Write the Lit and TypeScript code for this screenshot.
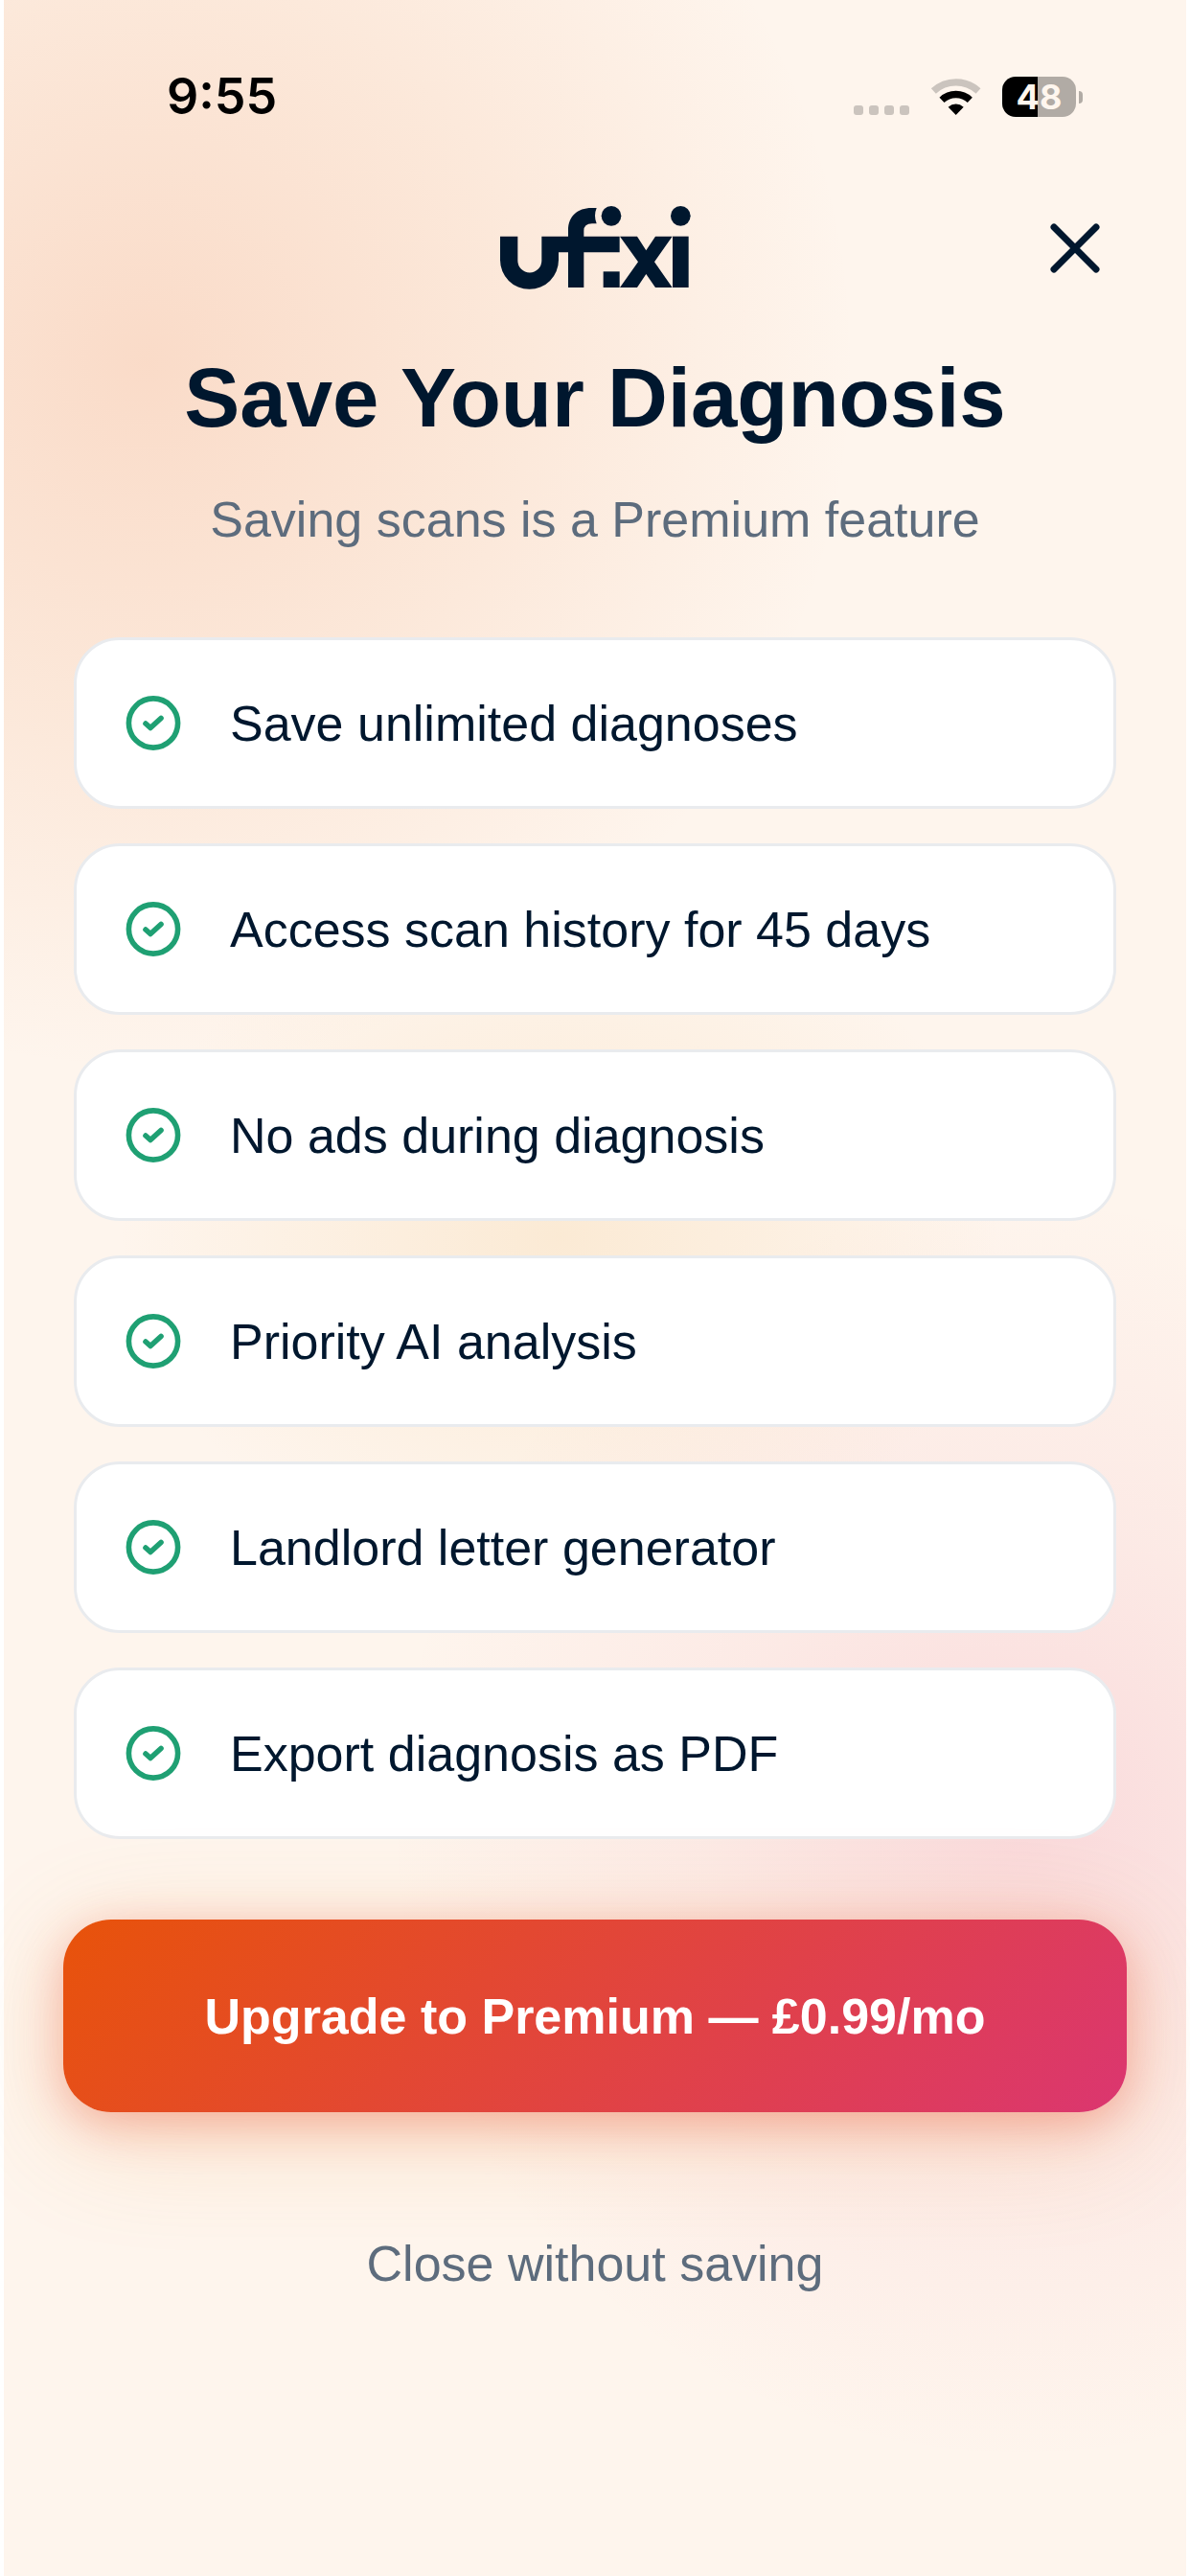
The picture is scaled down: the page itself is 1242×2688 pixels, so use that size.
import { LitElement, html, css, svg } from "lit";
import { customElement, property } from "lit/decorators.js";

@customElement("status-bar")
export class StatusBar extends LitElement {
  @property() time = "9:55";
  @property({ type: Number }) battery = 48;

  static styles = css`
    :host {
      display: flex;
      justify-content: space-between;
      align-items: center;
      padding: 80px 108px 0 170px;
      font-family: Inter, "Liberation Sans", sans-serif;
      color: #000;
    }
    .time {
      font-size: 52px;
      line-height: 42px;
      font-weight: 600;
    }
    .indicators {
      display: flex;
      align-items: center;
      gap: 22px;
    }
    .signal {
      display: flex;
      align-self: flex-end;
      gap: 6px;
      padding-bottom: 2px;
    }
    .dot {
      width: 10px;
      height: 10px;
      border-radius: 3px;
      background: #cbc4be;
    }
    .wifi {
      display: block;
      width: 53px;
      height: 38px;
    }
    .power {
      display: flex;
      align-items: center;
      gap: 3px;
    }
    .battery {
      display: flex;
      align-items: center;
      justify-content: center;
      width: 77px;
      height: 42px;
      border-radius: 14px;
      color: #fff6ee;
      font-size: 36px;
      line-height: 42px;
      font-weight: 700;
    }
    .nub {
      width: 4px;
      height: 13px;
      border-radius: 0 4px 4px 0;
      background: #b1aba5;
    }
  `;

  render() {
    const fill = `background: linear-gradient(90deg, #000 ${this.battery}%, #b1aba5 ${this.battery}%)`;
    return html`
      <span class="time">${this.time}</span>
      <div class="indicators">
        <div class="signal">
          ${[0, 1, 2, 3].map(() => html`<span class="dot"></span>`)}
        </div>
        <svg class="wifi" viewBox="332 63 159 114" aria-hidden="true">
          <path d="M342 102A103 103 0 0 1 482 102" fill="none" stroke="#cbc4be" stroke-width="22" />
          <path d="M368 130A64 64 0 0 1 456 130" fill="none" stroke="#000" stroke-width="22" />
          <path d="M412 177L388 152A36 36 0 0 1 436 152Z" />
        </svg>
        <div class="power">
          <span class="battery" style=${fill}>${this.battery}</span>
          <span class="nub"></span>
        </div>
      </div>
    `;
  }
}

const logo = svg`
  <path d="M124 169H179V245A37 37 0 0 0 254 245V169H337V150C337 106 366 80 410 80H426Q416 104 426 129H412Q386 129 386 152V169H498V219H386V329H337V219H307V243A91 91 0 0 1 124 243Z" />
  <rect x="447" y="279" width="51" height="50" />
  <path d="M499 169H553L581 213L610 169H663L607 249L663 329H610L581 287L553 329H499L556 249Z" />
  <rect x="664" y="169" width="50" height="160" />
  <circle cx="472" cy="105" r="31" />
  <circle cx="689" cy="105" r="31" />
`;

@customElement("feature-card")
export class FeatureCard extends LitElement {
  @property() label = "";

  static styles = css`
    :host {
      display: flex;
      align-items: center;
      gap: 51px;
      box-sizing: border-box;
      min-height: 179px;
      padding: 24px 51px;
      border: 3px solid #e9ebee;
      border-radius: 48px;
      background: #fff;
      color: #00172e;
      font-size: 52px;
      line-height: 64px;
    }
    .check {
      flex: none;
      width: 58px;
      height: 58px;
    }
  `;

  render() {
    return html`
      <svg class="check" viewBox="0 0 58 58" fill="none" stroke="#1fa073" stroke-width="5.6"
        stroke-linecap="round" stroke-linejoin="round" aria-hidden="true">
        <circle cx="29" cy="28.5" r="25.6" />
        <path d="M21 29L26 33.5L37 23.5" />
      </svg>
      <span>${this.label}</span>
    `;
  }
}

@customElement("app-root")
export class AppRoot extends LitElement {
  private features = [
    "Save unlimited diagnoses",
    "Access scan history for 45 days",
    "No ads during diagnosis",
    "Priority AI analysis",
    "Landlord letter generator",
    "Export diagnosis as PDF",
  ];

  static styles = css`
    :host {
      display: block;
      box-sizing: border-box;
      min-height: 100vh;
      padding-bottom: 120px;
      border: solid #fff;
      border-width: 0 4px;
      font-family: "Liberation Sans", Arial, sans-serif;
      color: #00172e;
      background:
        radial-gradient(circle 740px at 12% 14%, rgba(238, 145, 95, 0.26), rgba(238, 150, 95, 0.14) 50%, rgba(238, 160, 95, 0) 100%),
        radial-gradient(ellipse 460px 360px at 47% 48%, rgba(240, 195, 125, 0.22), rgba(240, 195, 125, 0) 100%),
        radial-gradient(circle 660px at 86% 71%, rgba(228, 80, 130, 0.17), rgba(228, 90, 130, 0.07) 50%, rgba(228, 90, 130, 0) 100%),
        #fef5ed;
    }
    main {
      display: flex;
      flex-direction: column;
      padding: 93px 62px 0;
    }
    header {
      display: grid;
      grid-template-columns: 1fr auto 1fr;
      align-items: center;
    }
    .logo {
      grid-column: 2;
      width: 199px;
      height: 87px;
      fill: #00172e;
    }
    button {
      font: inherit;
      border: 0;
      cursor: pointer;
    }
    .dismiss {
      justify-self: end;
      padding: 0;
      margin-right: 26px;
      background: none;
    }
    .dismiss svg {
      display: block;
      width: 56px;
      height: 56px;
    }
    h1 {
      margin: 63px 0 0;
      font-size: 87px;
      line-height: 100px;
      font-weight: 700;
      text-align: center;
    }
    .subtitle {
      margin: 45px 0 0;
      font-size: 52px;
      line-height: 64px;
      text-align: center;
      color: #5d6c7d;
    }
    ul {
      display: flex;
      flex-direction: column;
      gap: 36px;
      margin: 91px 0 0;
      padding: 0 11px;
      list-style: none;
    }
    .upgrade {
      margin-top: 84px;
      padding: 69px 24px 68px;
      border-radius: 50px;
      background: linear-gradient(135deg, #e8530a, #db3670);
      box-shadow:
        0 12px 48px rgba(232, 70, 50, 0.35),
        0 24px 120px rgba(236, 150, 60, 0.24);
      color: #fff;
      font-size: 52px;
      line-height: 64px;
      font-weight: 700;
    }
    .later {
      align-self: center;
      margin-top: 126px;
      padding: 0;
      background: none;
      color: #5d6c7d;
      font-size: 52px;
      line-height: 64px;
    }
  `;

  render() {
    return html`
      <status-bar></status-bar>
      <main>
        <header>
          <svg class="logo" viewBox="124 74 597 261" role="img" aria-label="ufixi">${logo}</svg>
          <button class="dismiss" aria-label="Close">
            <svg viewBox="0 0 56 56" stroke="#00172e" stroke-width="7" stroke-linecap="round" aria-hidden="true">
              <path d="M6 6L50 50M50 6L6 50" />
            </svg>
          </button>
        </header>
        <h1>Save Your Diagnosis</h1>
        <p class="subtitle">Saving scans is a Premium feature</p>
        <ul>
          ${this.features.map((f) => html`<li><feature-card .label=${f}></feature-card></li>`)}
        </ul>
        <button class="upgrade">Upgrade to Premium — £0.99/mo</button>
        <button class="later">Close without saving</button>
      </main>
    `;
  }
}
